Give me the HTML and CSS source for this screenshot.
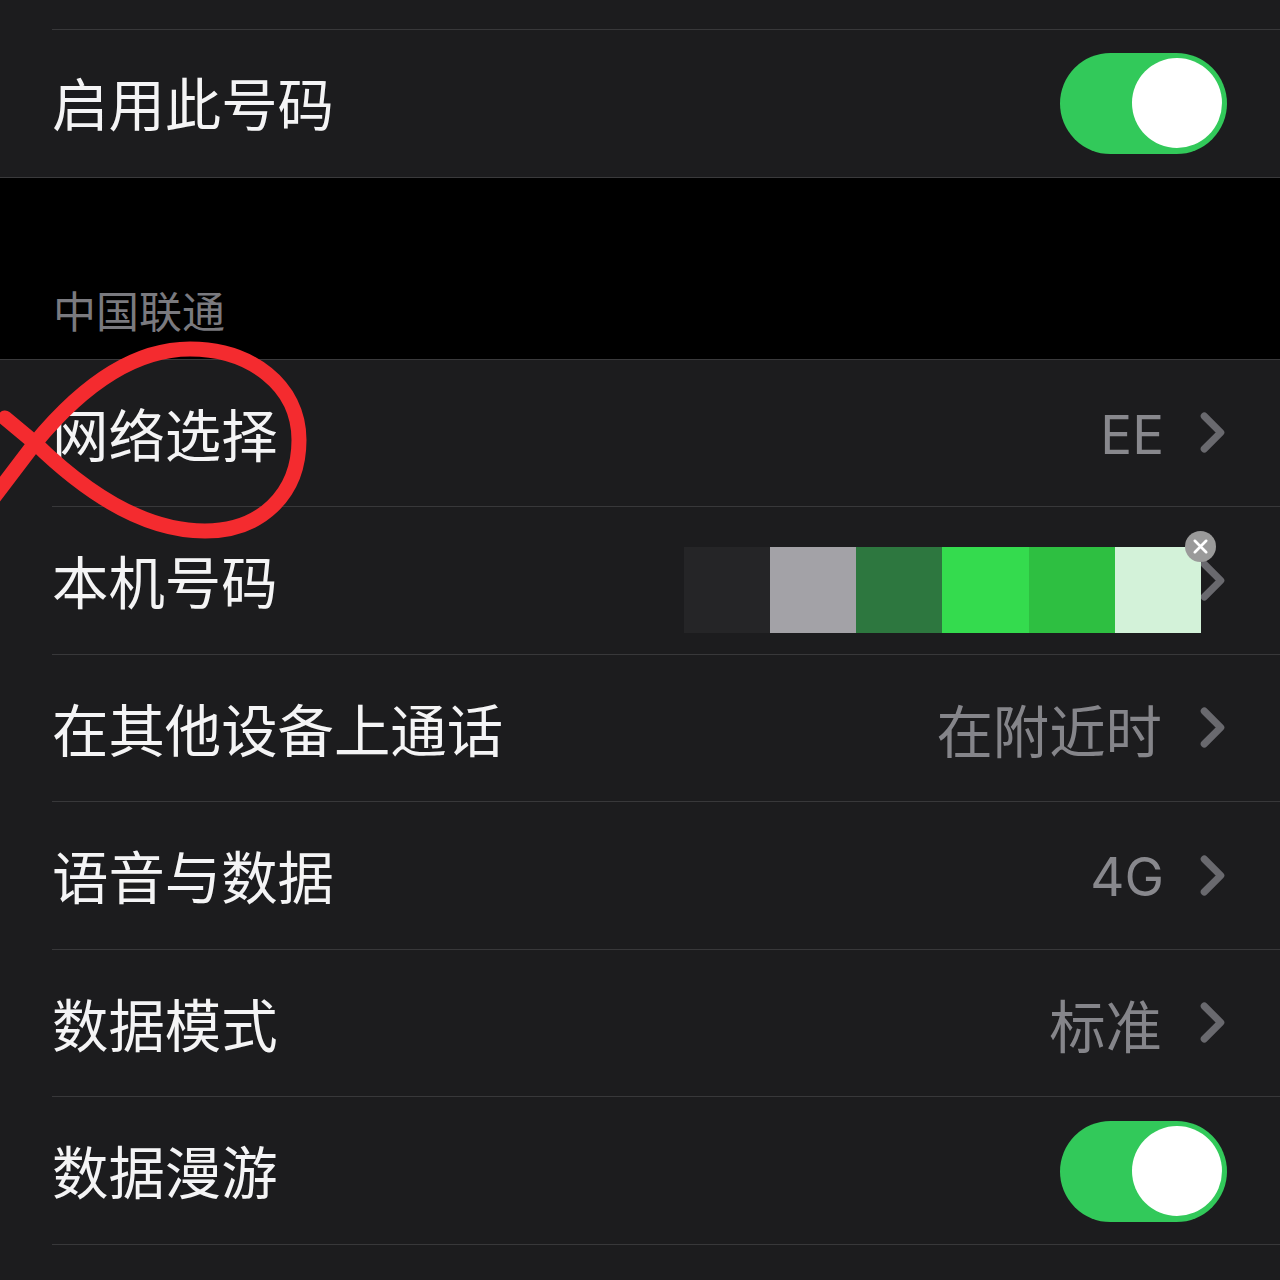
FILE: index.html
```html
<!DOCTYPE html>
<html lang="zh-CN">
<head>
<meta charset="utf-8">
<title>中国联通</title>
<link rel="stylesheet" href="styles.css">
</head>
<body>
<main class="screen">
  <section class="panel panel-top">
    <div class="row row-first">
      <span class="label">启用此号码</span>
      <span class="toggle"><span class="knob"></span></span>
    </div>
  </section>
  <div class="section-head"><span class="section-title">中国联通</span></div>
  <section class="panel panel-main">
    <div class="row">
      <span class="label">网络选择</span>
      <span class="value value-latin">EE</span>
      <svg class="chevron" viewBox="0 0 24 40"><path d="M4 4 L20 20 L4 36"/></svg>
    </div>
    <div class="row">
      <span class="label">本机号码</span>
      <svg class="chevron" viewBox="0 0 24 40"><path d="M4 4 L20 20 L4 36"/></svg>
    </div>
    <div class="row">
      <span class="label">在其他设备上通话</span>
      <span class="value">在附近时</span>
      <svg class="chevron" viewBox="0 0 24 40"><path d="M4 4 L20 20 L4 36"/></svg>
    </div>
    <div class="row">
      <span class="label">语音与数据</span>
      <span class="value value-latin">4G</span>
      <svg class="chevron" viewBox="0 0 24 40"><path d="M4 4 L20 20 L4 36"/></svg>
    </div>
    <div class="row">
      <span class="label">数据模式</span>
      <span class="value">标准</span>
      <svg class="chevron" viewBox="0 0 24 40"><path d="M4 4 L20 20 L4 36"/></svg>
    </div>
    <div class="row">
      <span class="label">数据漫游</span>
      <span class="toggle"><span class="knob"></span></span>
    </div>
  </section>

  <div class="redact">
    <span class="swatch s1"></span>
    <span class="swatch s2"></span>
    <span class="swatch s3"></span>
    <span class="swatch s4"></span>
    <span class="swatch s5"></span>
    <span class="swatch s6"></span>
    <span class="close">
      <svg viewBox="0 0 30 30"><path d="M9.5 9.5 L20.5 20.5 M20.5 9.5 L9.5 20.5"/></svg>
    </span>
  </div>

  <svg class="scribble" viewBox="0 0 320 560">
    <path d="M5 418 L35 443 C 80 487 140 531 205 531 C 260 531 299 495 299 440 C 299 385 250 349 190 349 C 125 349 72 398 35 443 L-12 505"/>
  </svg>
</main>
</body>
</html>
```
FILE: styles.css
```css
* {
  box-sizing: border-box;
}

html,
body {
  margin: 0;
  padding: 0;
  background: #000;
}

.screen {
  position: relative;
  width: 1280px;
  height: 1280px;
  overflow: hidden;
  background: #000;
  font-family: "Noto Sans CJK SC", "Inter", sans-serif;
}

.panel {
  background: #1c1c1e;
}

.panel-top {
  height: 177.5px;
  padding-top: 29px;
  border-bottom: 1px solid #3a3a3c;
}

.panel-main {
  height: 921px;
  border-top: 1px solid #3a3a3c;
}

.section-head {
  height: 181.5px;
  display: flex;
  align-items: flex-end;
  padding: 0 0 22px 53px;
}

.section-title {
  font-size: 43px;
  line-height: 56px;
  color: #7a7a7f;
}

.row {
  position: relative;
  height: 147.5px;
  display: flex;
  align-items: center;
  padding: 0 55px 0 52px;
}

.row::after {
  content: "";
  position: absolute;
  left: 52px;
  right: 0;
  bottom: 0.25px;
  height: 1px;
  background: #38383a;
}

.row-first {
  height: 148px;
}

.row-first::after {
  display: none;
}

.row-first::before {
  content: "";
  position: absolute;
  left: 52px;
  right: 0;
  top: 0;
  height: 1px;
  background: #38383a;
}

.label {
  flex: 1;
  font-size: 56.4px;
  line-height: 70px;
  color: #f4f4f5;
  font-weight: 400;
  position: relative;
  top: -1px;
}

.value {
  font-size: 56.4px;
  line-height: 70px;
  font-weight: 400;
  color: #85858a;
  margin-right: 38px;
}

.value-latin {
  font-family: "Inter", sans-serif;
  font-weight: 400;
  font-size: 53px;
  color: #88888d;
  margin-right: 36px;
  position: relative;
  top: 1px;
}

.chevron {
  width: 25px;
  height: 41px;
  flex: none;
  margin-top: -2px;
}

.chevron path {
  fill: none;
  stroke: #69696e;
  stroke-width: 7;
  stroke-linecap: round;
  stroke-linejoin: round;
}

.toggle {
  flex: none;
  width: 167px;
  height: 101px;
  margin-right: -2px;
  border-radius: 51px;
  background: #32c95a;
  display: flex;
  align-items: center;
  justify-content: flex-end;
  padding-right: 5px;
}

.knob {
  width: 90px;
  height: 90px;
  border-radius: 50%;
  background: #fff;
}

.redact {
  position: absolute;
  left: 683.5px;
  top: 547px;
  width: 517.5px;
  height: 86px;
  display: flex;
}

.swatch {
  flex: 1;
}

.s1 { background: #252527; }
.s2 { background: #a3a2a7; }
.s3 { background: #2d773f; }
.s4 { background: #34db4e; }
.s5 { background: #2ebf41; }
.s6 { background: #d3f2d9; }

.close {
  position: absolute;
  right: -15px;
  top: -16px;
  width: 31px;
  height: 31px;
  border-radius: 50%;
  background: #9a9a9a;
}

.close svg {
  display: block;
  width: 100%;
  height: 100%;
}

.close path {
  fill: none;
  stroke: #fff;
  stroke-width: 2.6;
  stroke-linecap: round;
}

.scribble {
  position: absolute;
  left: 0;
  top: 0;
  width: 320px;
  height: 560px;
  overflow: visible;
}

.scribble path {
  fill: none;
  stroke: #f42b2f;
  stroke-width: 15;
  stroke-linecap: round;
  stroke-linejoin: round;
}
```
